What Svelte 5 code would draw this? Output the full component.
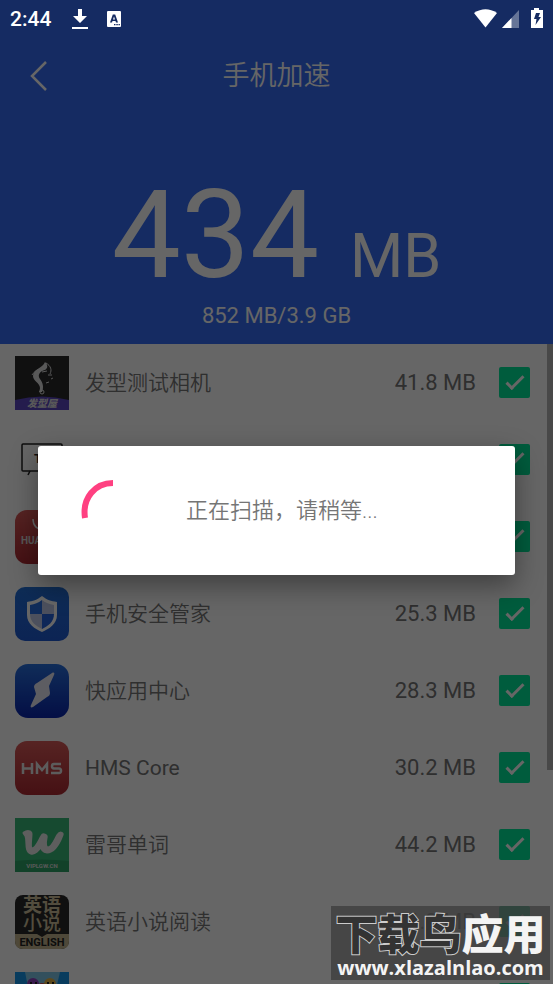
<script>
	let apps = $state([
		{ name: '发型测试相机', size: '41.8 MB', icon: 'hair', checked: true },
		{ name: '文字转换', size: '22.6 MB', icon: 'board', checked: true },
		{ name: '华为应用市场', size: '35.1 MB', icon: 'huawei', checked: true },
		{ name: '手机安全管家', size: '25.3 MB', icon: 'shield', checked: true },
		{ name: '快应用中心', size: '28.3 MB', icon: 'bolt', checked: true },
		{ name: 'HMS Core', size: '30.2 MB', icon: 'hms', checked: true, latin: true },
		{ name: '雷哥单词', size: '44.2 MB', icon: 'words', checked: true },
		{ name: '英语小说阅读', size: '36.3 MB', icon: 'novel', checked: true },
		{ name: '', size: '', icon: 'game', checked: true }
	]);
</script>

<div class="screen">
	<header>
		<div class="status">
			<span class="time">2:44</span>
			<svg class="download" width="18" height="22" viewBox="0 0 18 22">
				<path d="M7 1h4v7h5l-7 7-7-7h5zM1 19h16v2H1z" fill="#fff" />
			</svg>
			<svg class="keyboard" width="14" height="16" viewBox="0 0 14 16">
				<rect width="14" height="16" rx="1" fill="#fff" />
				<path d="M3 11.500 5.800 3.500h2.400l2.800 8H9L8.500 10H5.500L5 11.500zM6 8.500h2L7 5.500z" fill="#152b62" />
				<path d="M7 13h1.500v1.300H7zM9.300 13h1.500v1.300H9.300zM11.500 13h1.400v1.300h-1.400z" fill="#152b62" />
			</svg>
			<svg class="signals" width="70" height="22" viewBox="0 0 70 22">
				<path d="M0 5Q11.500-2.500 23 5L11.500 19.500z" fill="#fff" />
				<path d="M45 2v18H28z" fill="#fff" opacity=".35" />
				<path d="M37.500 10v10H28z" fill="#fff" />
				<path d="M57 2h3V0h5v2h4v18H57z" fill="#fff" />
				<path d="M62 5h4l-1.500 4H67l-5.500 8 1-6H60z" fill="#152b62" />
			</svg>
		</div>
		<nav>
			<button class="back" aria-label="返回">
				<svg width="18" height="32" viewBox="0 0 18 32">
					<path d="M16 2 2 16l14 14" fill="none" stroke="#fff" stroke-width="2.500" />
				</svg>
			</button>
			<h1>手机加速</h1>
		</nav>
		<div class="total">
			<span class="amount">434</span>
			<span class="unit">MB</span>
		</div>
		<p class="usage">852 MB/3.9 GB</p>
	</header>

	<ul>
		{#each apps as app (app.icon)}
			<li>
				<label>
					<svg class="icon" width="54" height="54" viewBox="0 0 54 54">
						{#if app.icon === 'hair'}
							<rect width="54" height="54" fill="#28282a" />
							<path d="M0 44Q27 37 54 44v10H0z" fill="#5b46c0" />
							<path d="M30 6C28 12 18 13 18 20c0 5 7 7 7 12 0 2-1 3-1 4h3c2-5 1-9-2-13-3-4 0-8 5-9 3-2 3-5 0-8z" fill="#ddd" />
							<circle cx="27" cy="36" r="2" fill="none" stroke="#ddd" />
							<path d="M31 7c5 3 6 7 4 11M17 19c3-5 9-7 13-8M27 16l5-1M33 19h4M36 23l2-1M31 27l3-1" fill="none" stroke="#ddd" />
							<text x="27" y="51" class="cjk logo-hair">发型屋</text>
						{:else if app.icon === 'board'}
							<rect x="7" y="11" width="40" height="27" rx="1" fill="none" stroke="#222" stroke-width="1.500" />
							<path d="M15 38l-2 4" stroke="#222" stroke-width="1.500" />
							<text x="19" y="30" class="logo-board">TXT</text>
						{:else if app.icon === 'huawei'}
							<rect width="54" height="54" rx="12" fill="url(#red)" />
							<path d="M18 9c0 14 18 14 18 0" fill="none" stroke="#fff" stroke-width="1.500" />
							<text x="6" y="34" class="logo-huawei">HUAWEI</text>
						{:else if app.icon === 'shield'}
							<rect width="54" height="54" rx="10" fill="url(#sky)" />
							<path d="M27 9c5 4 9 5 15 6v13c0 9-8 14-15 17-7-3-15-8-15-17V15c6-1 10-2 15-6z" fill="#fff" />
							<path d="M27 13v14H15v-9c5-1 8-2 12-5z" fill="#2a6ee0" />
							<path d="M27 13c4 3 7 4 12 5v9H27z" fill="#bdc9e8" />
							<path d="M15 27h12v15c-6-3-12-7-12-15z" fill="#bdc9e8" />
							<path d="M27 27h12c0 8-6 12-12 15z" fill="#2362db" />
						{:else if app.icon === 'bolt'}
							<rect width="54" height="54" rx="13" fill="url(#blue)" />
							<path d="M37 9c2-1 3 0 2 2l-5 11 1 7c0 2-1 3-3 4L18 43c-2 1-3 0-2-2l5-11-2-7c0-2 1-3 3-4z" fill="#e8e8f4" />
						{:else if app.icon === 'hms'}
							<rect width="54" height="54" rx="12" fill="url(#red)" />
							<path d="M8 22v11M17 22v11M8 27.500h9M22 33V23l5 6 5-6v10M46 23h-7q-2 0-2 2.200t2 2.300h5q2 0 2 2.300T44 32h-8" fill="none" stroke="#e6e6e6" stroke-width="2.500" />
						{:else if app.icon === 'words'}
							<rect width="54" height="54" fill="#38b878" />
							<path d="M0 43Q27 40 54 43v11H0z" fill="#2da367" />
							<path d="M9 15c3-2 7-2 7 1 0 5-2 15 1 15 4 0 7-8 10-13 1-2 5-1 4 2-1 5-1 10 2 10 4 0 7-8 10-13 2-3 5-2 4 0-3 8-8 17-15 17-4 0-5-3-6-6-3 4-6 8-10 7-6-2-3-12-5-17z" fill="#ececec" stroke="#ececec" stroke-width="3" stroke-linejoin="round" />
							<text x="27" y="50" class="logo-words">VIPLGW.CN</text>
						{:else if app.icon === 'novel'}
							<rect width="54" height="54" rx="8" fill="#292929" />
							<path d="M0 39h22l5 3 5-3h22v7q0 8-8 8H8q-8 0-8-8z" fill="#c4b48e" />
							<text x="27" y="17" class="cjk logo-novel">英语</text>
							<text x="27" y="35" class="cjk logo-novel light">小说</text>
							<text x="27" y="51" class="logo-english">ENGLISH</text>
						{:else}
							<rect width="54" height="54" fill="#1597ec" />
							<path d="M10 0l6 30h22l7-30z" fill="#80c8e8" />
							<circle cx="18" cy="12" r="6" fill="#9042be" />
							<circle cx="35" cy="12" r="6" fill="#e6b545" />
							<circle cx="27" cy="15" r="4" fill="#d94848" />
							<path d="M15 11h2M20 11h2M32 11h2M37 11h2" stroke="#222" stroke-width="2" />
						{/if}
					</svg>
					<span class="name" class:latin={app.latin}>{app.name}</span>
					<span class="size">{app.size}</span>
					<input type="checkbox" bind:checked={app.checked} />
				</label>
			</li>
		{/each}
	</ul>
	<div class="scrollbar"></div>

	<div class="overlay">
		<div class="dialog" role="dialog" aria-modal="true" aria-label="扫描">
			<svg width="66" height="66" viewBox="0 0 66 66">
				<path d="M33 5C15 5 2 20 5 40" fill="none" stroke="#ff4081" stroke-width="6" />
			</svg>
			<p>正在扫描，请稍等...</p>
		</div>
	</div>

	<div class="watermark">
		<strong><span>下载鸟</span>应用</strong>
		<small>www.xlazalnlao.com</small>
	</div>
</div>

<svg class="defs" width="0" height="0" aria-hidden="true">
	<linearGradient id="red" x2="0" y2="1">
		<stop stop-color="#d85a58" />
		<stop offset="1" stop-color="#ad2a32" />
	</linearGradient>
	<linearGradient id="sky" x2="0" y2="1">
		<stop stop-color="#2370d8" />
		<stop offset="1" stop-color="#205ad2" />
	</linearGradient>
	<linearGradient id="blue" x2="0" y2="1">
		<stop stop-color="#2870dd" />
		<stop offset="1" stop-color="#0a25ac" />
	</linearGradient>
</svg>

<style>
	:global(body) {
		margin: 0;
	}

	.screen {
		position: relative;
		height: 100vh;
		overflow: hidden;
		display: flex;
		flex-direction: column;
		background: #fff;
		font-family: Roboto, 'Noto Sans CJK SC', sans-serif;
	}

	header {
		flex: none;
		height: 344px;
		background: #356cf5;
		color: #fff;
	}

	.status {
		position: relative;
		z-index: 2;
		display: flex;
		align-items: center;
		height: 37px;
		padding: 0 9px 0 10px;
	}

	.time {
		font-size: 21px;
		font-weight: 500;
	}

	.download {
		margin-left: 20px;
	}

	.keyboard {
		margin-left: 18px;
	}

	.signals {
		margin-left: auto;
	}

	nav {
		display: grid;
		grid-template-columns: 60px 1fr 60px;
		align-items: center;
		height: 77px;
	}

	.back {
		display: flex;
		padding: 0 0 0 30px;
		border: none;
		background: none;
		cursor: pointer;
	}

	h1 {
		margin: 0;
		font-size: 27px;
		font-weight: 350;
		line-height: 34px;
		text-align: center;
	}

	.total {
		display: flex;
		justify-content: center;
		align-items: baseline;
		gap: 31px;
		margin-top: 53px;
		line-height: 136px;
	}

	.amount {
		font-size: 123px;
	}

	.unit {
		font-size: 61px;
		line-height: 61px;
	}

	.usage {
		margin: 0;
		font-size: 22px;
		line-height: 26px;
		text-align: center;
	}

	ul {
		margin: 0;
		padding: 0;
		list-style: none;
	}

	label {
		display: flex;
		align-items: center;
		height: 77px;
		padding: 0 23px 0 15px;
		color: #757575;
		font-size: 22px;
		line-height: 26px;
	}

	.name {
		flex: 1;
		margin-left: 16px;
		font-size: 21px;
		font-weight: 350;
	}

	.latin {
		font-weight: 400;
	}

	input {
		appearance: none;
		display: grid;
		place-items: center;
		width: 31px;
		height: 31px;
		margin: 0 0 0 23px;
		border-radius: 2px;
		background: #00e698;
	}

	input:checked::before {
		content: '';
		width: 15px;
		height: 6px;
		margin-bottom: 5px;
		border-left: 3px solid #fff;
		border-bottom: 3px solid #fff;
		transform: rotate(-45deg);
	}

	.scrollbar {
		position: absolute;
		top: 344px;
		right: 0;
		width: 6px;
		height: 426px;
		background: #b4b4b4;
	}

	.overlay {
		position: absolute;
		inset: 0;
		display: flex;
		align-items: center;
		padding: 37px 38px 0;
		background: rgba(0, 0, 0, 0.6);
	}

	.dialog {
		flex: 1;
		display: flex;
		align-items: center;
		gap: 40px;
		height: 129px;
		padding: 0 42px;
		box-sizing: border-box;
		border-radius: 3px;
		background: #fff;
		box-shadow: 0 10px 28px rgba(0, 0, 0, 0.4);
	}

	.dialog p {
		margin: 0;
		color: #757575;
		font-size: 22px;
		font-weight: 350;
		line-height: 26px;
	}

	.watermark {
		position: absolute;
		z-index: 3;
		right: 3px;
		bottom: 4px;
		width: 219px;
		height: 74px;
		background: rgba(62, 62, 62, 0.78);
		color: #f4f4f4;
		text-align: center;
		white-space: nowrap;
	}

	.watermark strong {
		display: block;
		padding-top: 9px;
		font-size: 42px;
		font-weight: 900;
		line-height: 42px;
	}

	.watermark strong span {
		color: #333;
		paint-order: stroke fill;
		-webkit-text-stroke: 2px #ccc;
	}

	.watermark small {
		display: block;
		font-family: 'Open Sans', sans-serif;
		font-size: 20px;
		font-weight: 700;
		line-height: 22px;
	}

	.defs {
		position: absolute;
	}

	.icon text {
		fill: #ddd;
		font-weight: 700;
	}

	.icon .cjk {
		text-anchor: middle;
	}

	.icon .logo-hair {
		font-size: 10px;
		font-weight: 900;
		font-style: italic;
	}

	.icon .logo-board {
		fill: #222;
		font-size: 13px;
	}

	.icon .logo-huawei {
		font-size: 10px;
	}

	.icon .logo-words {
		font-size: 6px;
		text-anchor: middle;
	}

	.icon .logo-novel {
		fill: #cfc09b;
		font-size: 19px;
	}

	.icon .light {
		font-weight: 500;
	}

	.icon .logo-english {
		fill: #222;
		font-size: 11px;
		text-anchor: middle;
	}
</style>
